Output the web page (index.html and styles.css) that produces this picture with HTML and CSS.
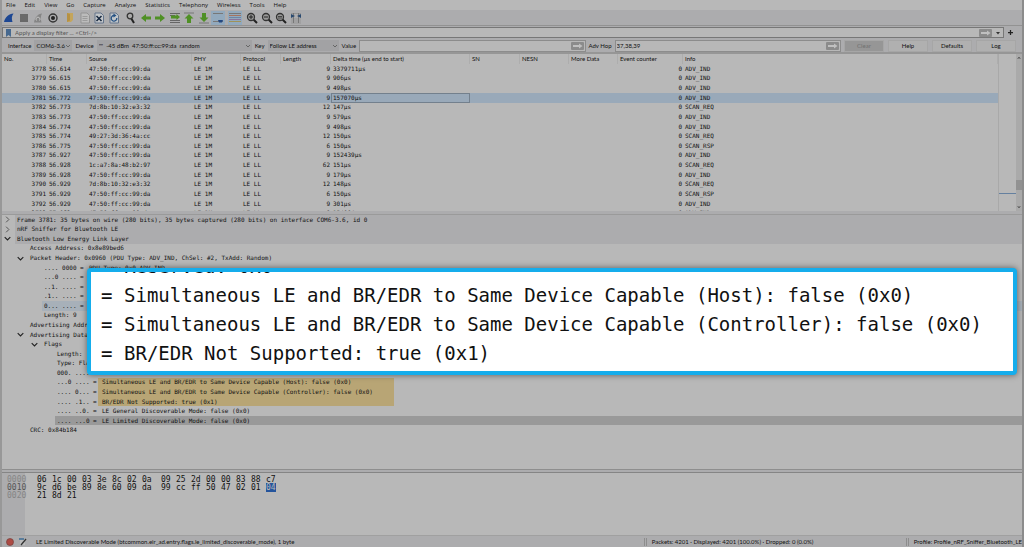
FILE: index.html
```html
<!DOCTYPE html>
<html lang="en">
<head>
    <meta charset="utf-8">
    <title>Bluetooth LE capture</title>
    <link rel="stylesheet" href="styles.css">
</head>
<body>
    <svg class="symbols" aria-hidden="true">
        <symbol id="open" viewBox="0 0 10 10"><path d="M1 3 5 7 9 3" fill="none" stroke="#222" stroke-width="1.600"/></symbol>
        <symbol id="closed" viewBox="0 0 10 10"><path d="M3 1 7 5 3 9" fill="none" stroke="#555" stroke-width="1.400"/></symbol>
        <symbol id="apply" viewBox="0 0 13 8"><rect width="13" height="8" rx="1" fill="#8b8b8b"/><path d="M2 3h6V1.500L11.500 4 8 6.500V5H2z" fill="#c0c0c0"/></symbol>
        <symbol id="lens" viewBox="0 0 14 14"><path d="m8.500 8.500 3.500 3.500" stroke="#222" stroke-width="2"/><circle cx="6" cy="6" r="3.500" fill="#999" stroke="#333" stroke-width="1.300"/></symbol>
    </svg>

    <nav class="menu">
        <button>File</button>
        <button>Edit</button>
        <button>View</button>
        <button>Go</button>
        <button>Capture</button>
        <button>Analyze</button>
        <button>Statistics</button>
        <button>Telephony</button>
        <button>Wireless</button>
        <button>Tools</button>
        <button>Help</button>
    </nav>

    <div class="toolbar">
        <div class="group short">
            <button aria-label="Start"><svg viewBox="0 0 14 14"><path d="M2 11C3 6 7 3 11.500 2.500 9.500 5 9.500 8 10.500 11z" fill="#1d4793"/></svg></button>
            <button aria-label="Stop"><svg viewBox="0 0 14 14"><rect x="3" y="3" width="8" height="8" fill="#696969"/></svg></button>
            <button aria-label="Restart"><svg viewBox="0 0 14 14"><path d="M3 11.500C4 6 7 3 11 2.500 9.500 5 9.500 8 10.500 11.500z" fill="#858585"/><path d="M5.500 9.500a2 2 0 1 1 3 0" fill="none" stroke="#c4c4c4"/></svg></button>
            <button aria-label="Options"><svg viewBox="0 0 14 14"><circle cx="7" cy="7" r="4" fill="none" stroke="#333" stroke-width="1.400"/><circle cx="7" cy="7" r="2" fill="#222"/></svg></button>
        </div>
        <div class="group short">
            <button aria-label="Open"><svg viewBox="0 0 14 14"><path d="M4 2h6v7l-2 2H4z" fill="#c4a55c"/><path d="M4 2v9l3-1.500V3z" fill="#b69143"/></svg></button>
            <button aria-label="Save"><svg viewBox="0 0 14 14"><path d="M3 2h6l2.500 2.500V12H3z" fill="#bcbcbc" stroke="#939393"/><path d="M4.500 5.500h5M4.500 7.500h5M4.500 9.500h5" stroke="#9b9b9b"/></svg></button>
            <button aria-label="Close"><svg viewBox="0 0 14 14"><path d="M3 2h6l2.500 2.500V12H3z" fill="#c3c6c9" stroke="#65758b"/><path d="m4.500 5 5 5M9.500 5l-5 5" stroke="#17283f" stroke-width="1.500"/></svg></button>
            <button aria-label="Reload"><svg viewBox="0 0 14 14"><path d="M3 2h6l2.500 2.500V12H3z" fill="#c0c5c9" stroke="#65758b"/><path d="M9.800 7A2.800 2.800 0 1 1 7 4.500" fill="none" stroke="#235083" stroke-width="1.300"/><path d="m6.500 2.500 3 2-3 2z" fill="#235083"/></svg></button>
        </div>
        <div class="group long">
            <button aria-label="Find"><svg viewBox="0 0 14 14"><path d="m7 7 3 5" stroke="#222" stroke-width="2"/><circle cx="6" cy="5" r="2.800" fill="#aaa" stroke="#333" stroke-width="1.300"/></svg></button>
            <button aria-label="Previous"><svg viewBox="0 0 14 14"><path d="M2 7 7 3v2.500h5v3H7V11z" fill="#4f9025"/></svg></button>
            <button aria-label="Next"><svg viewBox="0 0 14 14"><path d="M12 7 7 3v2.500H2v3h5V11z" fill="#4f9025"/></svg></button>
            <button aria-label="Go to packet"><svg viewBox="0 0 14 14"><path d="M2 2.500h10M2 4.500h5M2 9.500h10M2 11.500h10" stroke="#666"/><path d="M12 6 8.500 3v1.500H3v3h5.500V9z" fill="#4f9025"/></svg></button>
            <button aria-label="First packet"><svg viewBox="0 0 14 14"><path d="M2 2h10" stroke="#777"/><path d="m7 3 4.500 4.500H9V12H5V7.500H2.500z" fill="#4f9025"/></svg></button>
            <button aria-label="Last packet"><svg viewBox="0 0 14 14"><path d="M2 12h10" stroke="#777"/><path d="m7 11 4.500-4.500H9V2H5v4.500H2.500z" fill="#4f9025"/></svg></button>
            <button class="on" aria-label="Auto scroll"><svg viewBox="0 0 14 14"><path d="M2 2.500h10M2 10.500h10" stroke="#777"/><path d="M7 9h5l-1 2.500H8z" fill="#244982"/></svg></button>
        </div>
        <button class="on" aria-label="Colorize"><svg viewBox="0 0 14 14"><path d="M1 2.500h12" stroke="#777"/><path d="M1 4.500h12" stroke="#a5735f"/><path d="M1 6.500h12" stroke="#6e84a6"/><path d="M1 8.500h12" stroke="#8a739b"/><path d="M1 10.500h12" stroke="#a09258"/></svg></button>
        <div class="group short">
            <button aria-label="Zoom in"><svg viewBox="0 0 14 14"><use href="#lens"/><path d="M4 6h4M6 4v4" stroke="#222"/></svg></button>
            <button aria-label="Zoom out"><svg viewBox="0 0 14 14"><use href="#lens"/><path d="M4 6h4" stroke="#222"/></svg></button>
            <button aria-label="Normal size"><svg viewBox="0 0 14 14"><use href="#lens"/><path d="M4 5.500h4M4 7h4" stroke="#222" stroke-width=".700"/></svg></button>
            <button aria-label="Resize columns"><svg viewBox="0 0 14 14"><path d="M2 2.500h10M2 8h10M2 10h10M2 12h10" stroke="#959595"/><path d="M4.500 2v10M9.500 2v10" stroke="#777"/><path d="m2 3 4 2-4 2zm10 0L8 5l4 2z" fill="#29496f"/></svg></button>
        </div>
    </div>

    <div class="filter-bar">
        <div class="filter">
            <svg class="bookmark" viewBox="0 0 5 8"><path d="M0 0h5v8L2.500 6 0 8z" fill="#47698f"/></svg>
            <input type="text" aria-label="Display filter" placeholder="Apply a display filter ... &lt;Ctrl-/&gt;">
            <svg class="apply"><use href="#apply"/></svg>
            <svg class="drop" viewBox="0 0 4 4"><path d="M0 1h4L2 3.500z" fill="#333"/></svg>
        </div>
        <button aria-label="Add filter button"><svg viewBox="0 0 6 6"><path d="M3 0v6M0 3h6" stroke="#222" stroke-width="1.500"/></svg></button>
    </div>

    <div class="sniffer-bar">
        <label for="interface">Interface</label>
        <select id="interface" class="interface"><option>COM6-3.6</option></select>
        <label for="device">Device</label>
        <select id="device" class="device"><option>""&nbsp; -45 dBm&nbsp; 47:50:ff:cc:99:da&nbsp; random</option></select>
        <label for="key">Key</label>
        <select id="key" class="key"><option>Follow LE address</option></select>
        <label for="value">Value</label>
        <div class="field"><input type="text" id="value"><svg class="apply"><use href="#apply"/></svg></div>
        <label for="hop">Adv Hop</label>
        <div class="field"><input type="text" id="hop" value="37,38,39"><svg class="apply"><use href="#apply"/></svg></div>
        <div class="actions">
            <button disabled>Clear</button>
            <button>Help</button>
            <button>Defaults</button>
            <button>Log</button>
        </div>
    </div>

    <div class="packets">
        <div class="packet-list">
            <table>
                <colgroup>
                    <col class="c-no"><col class="c-time"><col class="c-source"><col class="c-phy"><col class="c-protocol"><col class="c-length">
                    <col class="c-delta"><col class="c-sn"><col class="c-nesn"><col class="c-more"><col class="c-event"><col>
                </colgroup>
                <thead>
                    <tr><th>No.</th><th>Time</th><th>Source</th><th>PHY</th><th>Protocol</th><th>Length</th><th>Delta time (µs end to start)</th><th>SN</th><th>NESN</th><th>More Data</th><th>Event counter</th><th>Info</th></tr>
                </thead>
                <tbody id="packetRows"></tbody>
            </table>
        </div>
        <div class="minimap"><div class="mark"></div></div>
        <div class="scrollbar">
            <svg viewBox="0 0 10 10"><path d="m2 7 3-4 3 4" fill="none" stroke="#333" stroke-width="2"/></svg>
            <div class="thumb"></div>
            <svg viewBox="0 0 10 10"><path d="m2 3 3 4 3-4" fill="none" stroke="#333" stroke-width="2"/></svg>
        </div>
    </div>

    <div class="details">
        <ul class="tree">
            <li class="level0"><button aria-label="Expand"><svg><use href="#closed"/></svg></button><span class="line top">Frame 3781: 35 bytes on wire (280 bits), 35 bytes captured (280 bits) on interface COM6-3.6, id 0</span></li>
            <li class="level0"><button aria-label="Expand"><svg><use href="#closed"/></svg></button><span class="line top">nRF Sniffer for Bluetooth LE</span></li>
            <li class="level0"><button aria-label="Collapse"><svg><use href="#open"/></svg></button><span class="line top">Bluetooth Low Energy Link Layer</span></li>
            <li class="level1"><span class="line">Access Address: 0x8e89bed6</span></li>
            <li class="level1"><button aria-label="Collapse"><svg><use href="#open"/></svg></button><span class="line">Packet Header: 0x0960 (PDU Type: ADV_IND, ChSel: #2, TxAdd: Random)</span></li>
            <li class="level2"><span class="line"><span class="bits">.... 0000 =</span><span class="meaning">PDU Type: 0x0 ADV_IND</span></span></li>
            <li class="level2"><span class="line"><span class="bits">...0 .... =</span></span></li>
            <li class="level2"><span class="line"><span class="bits">..1. .... =</span></span></li>
            <li class="level2"><span class="line"><span class="bits">.1.. .... =</span></span></li>
            <li class="level2"><span class="line related"><span class="bits">0... .... =</span></span></li>
            <li class="level2"><span class="line">Length: 9</span></li>
            <li class="level1"><span class="line">Advertising Address</span></li>
            <li class="level1"><button aria-label="Collapse"><svg><use href="#open"/></svg></button><span class="line">Advertising Data</span></li>
            <li class="level2"><button aria-label="Collapse"><svg><use href="#open"/></svg></button><span class="line">Flags</span></li>
            <li class="level3"><span class="line">Length:</span></li>
            <li class="level3"><span class="line">Type: Flags</span></li>
            <li class="level3"><span class="line"><span class="bits">000. .... =</span><span class="meaning">Reserved: 0x0</span></span></li>
            <li class="level3"><span class="line"><span class="bits">...0 .... =</span><span class="meaning marked">Simultaneous LE and BR/EDR to Same Device Capable (Host): false (0x0)</span></span></li>
            <li class="level3"><span class="line"><span class="bits">.... 0... =</span><span class="meaning marked">Simultaneous LE and BR/EDR to Same Device Capable (Controller): false (0x0)</span></span></li>
            <li class="level3"><span class="line"><span class="bits">.... .1.. =</span><span class="meaning marked">BR/EDR Not Supported: true (0x1)</span></span></li>
            <li class="level3"><span class="line"><span class="bits">.... ..0. =</span><span class="meaning">LE General Discoverable Mode: false (0x0)</span></span></li>
            <li class="level3"><span class="line selected"><span class="bits">.... ...0 =</span><span class="meaning">LE Limited Discoverable Mode: false (0x0)</span></span></li>
            <li class="level1"><span class="line">CRC: 0x84b184</span></li>
        </ul>

        <!-- Enlarged view of the highlighted flags -->
        <div class="callout">
            <p><span class="equals">=</span>Reserved: 0x0</p>
            <p><span class="equals">=</span>Simultaneous LE and BR/EDR to Same Device Capable (Host): false (0x0)</p>
            <p><span class="equals">=</span>Simultaneous LE and BR/EDR to Same Device Capable (Controller): false (0x0)</p>
            <p><span class="equals">=</span>BR/EDR Not Supported: true (0x1)</p>
        </div>
    </div>

    <div class="bytes" id="bytes"></div>

    <footer class="status">
        <button aria-label="Expert information"><svg viewBox="0 0 8 8"><circle cx="4" cy="4" r="3.500" fill="#ad4a43" stroke="#75403c" stroke-width=".700"/></svg></button>
        <button aria-label="Capture comment"><svg viewBox="0 0 8 8"><path d="M1 1h5v6H1z" fill="#bbb"/><path d="M0 1h5" stroke="#3e6d94" stroke-width="1.500"/><path d="m2 7 5-6" stroke="#333" stroke-width="1.300"/></svg></button>
        <span class="hint">LE Limited Discoverable Mode (btcommon.eir_ad.entry.flags.le_limited_discoverable_mode), 1 byte</span>
        <span class="counts">Packets: 4201 · Displayed: 4201 (100.0%) · Dropped: 0 (0.0%)</span>
        <span class="profile">Profile: Profile_nRF_Sniffer_Bluetooth_LE</span>
    </footer>

    <script>
        const selected = 3781;
        const packets = [
            [3778, '56.614', '47:50:ff:cc:99:da', 9, '3379711µs', 'ADV_IND'],
            [3779, '56.615', '47:50:ff:cc:99:da', 9, '906µs', 'ADV_IND'],
            [3780, '56.615', '47:50:ff:cc:99:da', 9, '498µs', 'ADV_IND'],
            [3781, '56.772', '47:50:ff:cc:99:da', 9, '157070µs', 'ADV_IND'],
            [3782, '56.773', '7d:8b:10:32:e3:32', 12, '147µs', 'SCAN_REQ'],
            [3783, '56.773', '47:50:ff:cc:99:da', 9, '579µs', 'ADV_IND'],
            [3784, '56.774', '47:50:ff:cc:99:da', 9, '498µs', 'ADV_IND'],
            [3785, '56.774', '49:27:3d:36:4a:cc', 12, '150µs', 'SCAN_REQ'],
            [3786, '56.775', '47:50:ff:cc:99:da', 6, '150µs', 'SCAN_RSP'],
            [3787, '56.927', '47:50:ff:cc:99:da', 9, '152439µs', 'ADV_IND'],
            [3788, '56.928', '1c:a7:8a:48:b2:97', 62, '151µs', 'SCAN_REQ'],
            [3789, '56.928', '47:50:ff:cc:99:da', 9, '179µs', 'ADV_IND'],
            [3790, '56.929', '7d:8b:10:32:e3:32', 12, '148µs', 'SCAN_REQ'],
            [3791, '56.929', '47:50:ff:cc:99:da', 6, '150µs', 'SCAN_RSP'],
            [3792, '56.929', '47:50:ff:cc:99:da', 9, '301µs', 'ADV_IND'],
            [3793, '57.083', '47:50:ff:cc:99:da', 9, '154004µs', 'ADV_IND']
        ];
        document.getElementById('packetRows').innerHTML = packets.map(([no, time, source, length, delta, info]) => `
            <tr class="${no === selected ? 'current' : ''}">
                <td class="num">${no}</td><td>${time}</td><td>${source}</td><td>LE 1M</td><td>LE LL</td>
                <td class="num">${length}</td><td class="delta">${delta}</td><td></td><td></td><td></td><td class="num">0</td><td>${info}</td>
            </tr>`).join('');

        const dump = [
            ['0000', '06 1c 00 03 3e 8c 02 0a 09 25 2d 00 00 83 88 c7'],
            ['0010', '9c d6 be 89 8e 60 09 da 99 cc ff 50 47 02 01 04'],
            ['0020', '21 8d 21']
        ];
        document.getElementById('bytes').innerHTML = dump.map(([offset, row], line) => {
            const cells = row.split(' ').map((byte, i) => {
                const picked = line === 1 && i === 15;
                return `<span class="byte">${picked ? `<mark>${byte}</mark>` : byte}</span>`;
            });
            return `<div class="dump-row"><span class="offset ${line === 1 ? 'active' : ''}">${offset}</span>${cells.join('')}</div>`;
        }).join('');
    </script>
</body>
</html>
```
FILE: styles.css
```css
* {
    box-sizing: border-box;
}

body {
    display: flex;
    flex-direction: column;
    height: 100vh;
    margin: 0;
    overflow: hidden;
    border-left: 2px solid #989898;
    border-right: 2px solid #8c8c8c;
    background-color: #acacae;
    color: #111;
    font-family: Lato, "Noto Sans", sans-serif;
    font-size: 6px;
    line-height: 8px;
}

button,
input,
select {
    margin: 0;
    padding: 0;
    border: 0;
    background: none;
    color: inherit;
    font: inherit;
}

svg {
    display: block;
}

.symbols {
    position: absolute;
    width: 0;
    height: 0;
}

/* Menu and main toolbar */
.menu {
    display: flex;
    gap: 9px;
    height: 10px;
    padding-left: 4px;
    background-color: #b8b8b8;
    font-family: "Open Sans", "Noto Sans", sans-serif;
}

.toolbar {
    display: flex;
    align-items: center;
    gap: 3px;
    height: 16px;
    border-bottom: 1px solid #929292;
}

.toolbar button {
    width: 14px;
    height: 14px;
}

.toolbar .on {
    background-color: #92a9bd;
}

.group {
    display: flex;
    justify-content: space-between;
}

.short {
    width: 58px;
}

.long {
    width: 101px;
}

/* Display filter */
.filter-bar {
    display: flex;
    align-items: center;
    gap: 4px;
    height: 13px;
    padding-right: 9px;
}

.filter {
    display: flex;
    flex: 1;
    align-items: center;
    gap: 4px;
    height: 11px;
    padding: 0 3px;
    border: 1px solid #777;
    background-color: #b8b8b8;
}

.filter input {
    flex: 1;
}

.filter input::placeholder {
    color: #555;
}

.bookmark {
    width: 5px;
    height: 8px;
}

.apply {
    width: 13px;
    height: 8px;
}

.drop {
    width: 4px;
    height: 4px;
}

.filter-bar button svg {
    width: 5px;
    height: 5px;
}

/* Sniffer toolbar */
.sniffer-bar {
    display: flex;
    align-items: center;
    gap: 3px;
    height: 15px;
    padding: 0 6px;
    border-bottom: 2px solid #969696;
}

.sniffer-bar select {
    height: 11px;
    padding-left: 2px;
    appearance: none;
    background: #a2a2a4 url("data:image/svg+xml,%3Csvg xmlns='http://www.w3.org/2000/svg' width='4' height='4'%3E%3Cpath d='M0 1l2 2 2-2' fill='none' stroke='%23666'/%3E%3C/svg%3E") no-repeat right 2px center;
}

.sniffer-bar .interface {
    width: 38px;
}

.sniffer-bar .device {
    width: 155px;
}

.sniffer-bar .key {
    width: 71px;
}

.field {
    display: flex;
    flex: 1;
    align-items: center;
    height: 12px;
    padding: 0 1px;
    border: 1px solid #8c8c8c;
    background-color: #b8b8b8;
}

.field input {
    flex: 1;
    min-width: 0;
}

.actions {
    display: flex;
    gap: 4px;
}

.actions button {
    width: 40px;
    height: 12px;
    background-color: #b0b0b0;
    border: 1px solid #a6a6a6;
}

.actions button:disabled {
    background-color: #969696;
    color: #707070;
}

/* Packet list */
.packets {
    display: flex;
    height: 157px;
    background-color: #b8b8b8;
}

.packet-list {
    flex: 1;
    overflow: hidden;
}

.packets table {
    width: 100%;
    height: 164px;
    table-layout: fixed;
    border-collapse: collapse;
}

.c-no { width: 45px; }
.c-time { width: 40px; }
.c-source { width: 105px; }
.c-phy { width: 49px; }
.c-protocol { width: 40px; }
.c-length { width: 50px; }
.c-delta { width: 139px; }
.c-sn { width: 50px; }
.c-nesn { width: 49px; }
.c-more { width: 49px; }
.c-event { width: 65px; }

th {
    height: 10px;
    padding: 0 2px;
    box-shadow: inset -1px 0 #adadad;
    font-weight: normal;
    text-align: left;
}

td {
    padding: 0 1px 0 2px;
    font-family: "DejaVu Sans Mono", monospace;
    white-space: nowrap;
}

.num {
    text-align: right;
}

.current {
    background-color: #99a9b9;
}

.current .delta {
    box-shadow: inset 0 0 0 1px #73808d;
}

.minimap {
    width: 18px;
    padding-top: 139px;
    border-left: 1px solid #a9a9a9;
}

.mark {
    height: 1px;
    background-color: #65809f;
}

.scrollbar {
    display: flex;
    flex-direction: column;
    align-items: center;
    justify-content: space-between;
    width: 6px;
    padding: 2px 0;
    background-color: #aaa;
}

.scrollbar svg {
    width: 4px;
    height: 4px;
}

.thumb {
    width: 6px;
    height: 10px;
    margin-top: auto;
    margin-bottom: 15px;
    background-color: #919191;
}

/* Packet details */
.details {
    position: relative;
    flex: 1;
    margin-top: 3px;
    border-top: 1px solid #9a9a9a;
    border-bottom: 1px solid #8e8e8e;
    background-color: #b8b8b8;
}

.tree {
    display: grid;
    grid-auto-rows: 1fr;
    height: 220px;
    margin: 0;
    padding: 0;
    list-style: none;
    font-family: "DejaVu Sans Mono", monospace;
}

.tree li {
    display: flex;
    align-items: stretch;
    justify-content: flex-end;
}

.tree button {
    width: 11px;
}

.tree svg {
    width: 7px;
    height: 7px;
}

.line {
    display: flex;
    align-items: center;
    padding-left: 2px;
    white-space: nowrap;
}

.level0 .line { width: calc(100% - 13px); }
.level1 .line { width: calc(100% - 26px); }
.level2 .line { width: calc(100% - 40px); }
.level3 .line { width: calc(100% - 53px); }

.top {
    background-color: #acacae;
}

.related {
    background-color: #a7b0b9;
}

.selected {
    background-color: #999;
}

.bits {
    width: 41px;
}

.meaning {
    display: flex;
    align-items: center;
    align-self: stretch;
    padding-left: 4px;
}

.marked {
    width: 296px;
    background-color: #b8a575;
}

.callout {
    position: absolute;
    top: 53px;
    left: 85px;
    right: 5px;
    display: flex;
    flex-direction: column;
    justify-content: flex-end;
    height: 107px;
    padding: 0 0 3px 10px;
    overflow: hidden;
    border: 4px solid #15adec;
    border-radius: 4px;
    background-color: #fff;
    box-shadow: 0 0 6px rgba(0, 0, 0, 0.5);
    font-family: "DejaVu Sans Mono", monospace;
    font-size: 19px;
    line-height: 29px;
}

.callout p {
    flex: none;
    display: flex;
    margin: 0;
    white-space: nowrap;
}

.equals {
    width: 23px;
}

/* Packet bytes */
.bytes {
    height: 63px;
    margin-top: 2px;
    padding-top: 3px;
    border-top: 1px solid #858585;
    background: linear-gradient(to right, #acacae 23px, #b8b8b8 23px);
    font-family: "DejaVu Sans Mono", monospace;
    font-size: 8px;
}

.dump-row {
    display: flex;
    padding-left: 5px;
}

.offset {
    width: 30px;
    color: #858585;
}

.active {
    color: #555;
}

.byte {
    width: 15px;
}

.byte:nth-child(10) {
    margin-left: 4px;
}

.bytes mark {
    background-color: #24549c;
    color: #b8b8b8;
}

/* Status bar */
.status {
    display: flex;
    align-items: center;
    gap: 5px;
    height: 12px;
    padding-left: 4px;
    border-top: 1px solid #a0a0a0;
}

.status svg {
    width: 8px;
    height: 8px;
}

.hint {
    flex: 1;
    padding-left: 4px;
}

.counts,
.profile {
    padding-left: 5px;
    border-left: 3px double #8d8d8d;
    white-space: nowrap;
}

.counts {
    width: 257px;
}

.profile {
    flex: none;
    min-width: 106px;
}
```
